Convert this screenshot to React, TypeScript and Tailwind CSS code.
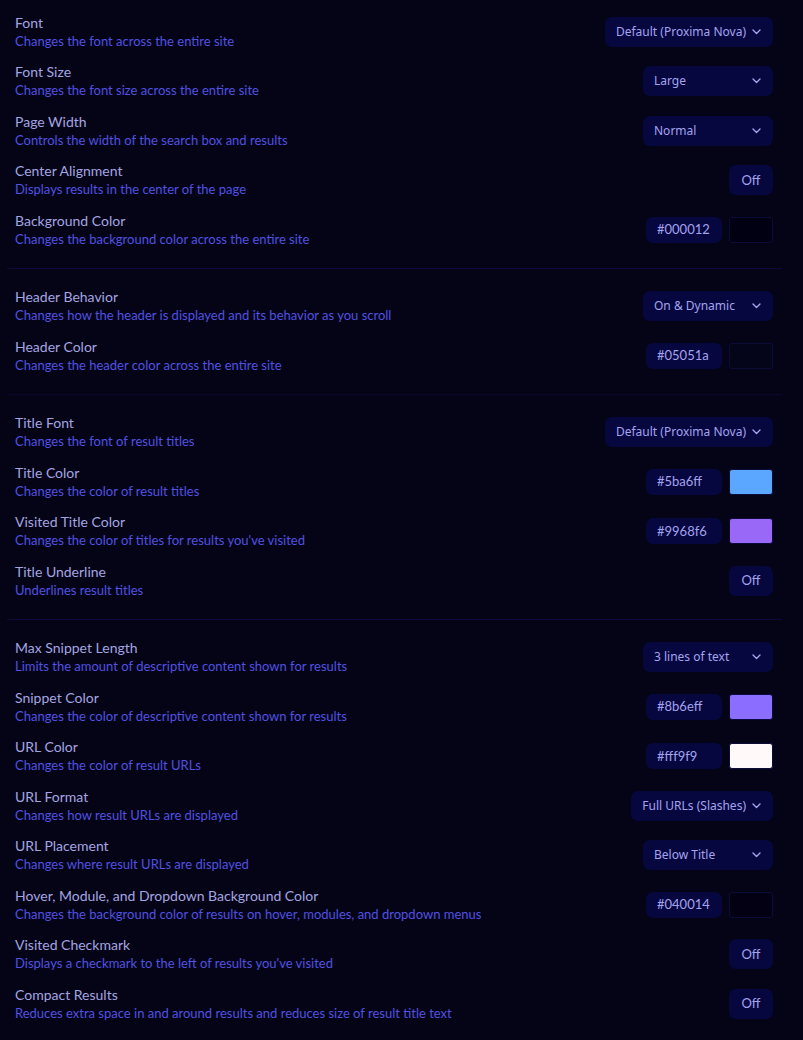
import React from "react";

type Row =
  | { title: string; desc: string; kind: "select"; value: string }
  | { title: string; desc: string; kind: "toggle"; value: string }
  | { title: string; desc: string; kind: "color"; value: string; swatch: string };

const sections: { rows: Row[]; line: string; top: string }[] = [
  {
    top: "pt-[7px]",
    line: "border-[#0a0a3c]",
    rows: [
      { title: "Font", desc: "Changes the font across the entire site", kind: "select", value: "Default (Proxima Nova)" },
      { title: "Font Size", desc: "Changes the font size across the entire site", kind: "select", value: "Large" },
      { title: "Page Width", desc: "Controls the width of the search box and results", kind: "select", value: "Normal" },
      { title: "Center Alignment", desc: "Displays results in the center of the page", kind: "toggle", value: "Off" },
      { title: "Background Color", desc: "Changes the background color across the entire site", kind: "color", value: "#000012", swatch: "#000012" },
    ],
  },
  {
    top: "pt-[13px]",
    line: "border-[#08082e]",
    rows: [
      { title: "Header Behavior", desc: "Changes how the header is displayed and its behavior as you scroll", kind: "select", value: "On & Dynamic" },
      { title: "Header Color", desc: "Changes the header color across the entire site", kind: "color", value: "#05051a", swatch: "#05051a" },
    ],
  },
  {
    top: "pt-[13px]",
    line: "border-[#0a0a3c]",
    rows: [
      { title: "Title Font", desc: "Changes the font of result titles", kind: "select", value: "Default (Proxima Nova)" },
      { title: "Title Color", desc: "Changes the color of result titles", kind: "color", value: "#5ba6ff", swatch: "#5ba6ff" },
      { title: "Visited Title Color", desc: "Changes the color of titles for results you've visited", kind: "color", value: "#9968f6", swatch: "#9968f6" },
      { title: "Title Underline", desc: "Underlines result titles", kind: "toggle", value: "Off" },
    ],
  },
  {
    top: "pt-[13px]",
    line: "border-transparent",
    rows: [
      { title: "Max Snippet Length", desc: "Limits the amount of descriptive content shown for results", kind: "select", value: "3 lines of text" },
      { title: "Snippet Color", desc: "Changes the color of descriptive content shown for results", kind: "color", value: "#8b6eff", swatch: "#8b6eff" },
      { title: "URL Color", desc: "Changes the color of result URLs", kind: "color", value: "#fff9f9", swatch: "#fff9f9" },
      { title: "URL Format", desc: "Changes how result URLs are displayed", kind: "select", value: "Full URLs (Slashes)" },
      { title: "URL Placement", desc: "Changes where result URLs are displayed", kind: "select", value: "Below Title" },
      { title: "Hover, Module, and Dropdown Background Color", desc: "Changes the background color of results on hover, modules, and dropdown menus", kind: "color", value: "#040014", swatch: "#040014" },
      { title: "Visited Checkmark", desc: "Displays a checkmark to the left of results you've visited", kind: "toggle", value: "Off" },
      { title: "Compact Results", desc: "Reduces extra space in and around results and reduces size of result title text", kind: "toggle", value: "Off" },
    ],
  },
];

const ctrlFont = { fontFamily: "'Noto Sans', 'Open Sans', sans-serif" };

function Chevron() {
  return (
    <svg width="9" height="6" viewBox="0 0 9 6" fill="none" className="shrink-0">
      <polyline points="1,1 4.5,4.5 8,1" stroke="#a3a3f0" strokeWidth="1.4" strokeLinecap="round" strokeLinejoin="round" />
    </svg>
  );
}

function Control({ row }: { row: Row }) {
  if (row.kind === "select") {
    return (
      <div
        style={ctrlFont}
        className="flex h-[30px] min-w-[130px] items-center justify-between gap-[6px] rounded-[7px] bg-[#07073f] pl-[11px] pr-[12px] text-[12px] text-[#a3a3f0]"
      >
        <span>{row.value}</span>
        <Chevron />
      </div>
    );
  }
  if (row.kind === "toggle") {
    return (
      <div className="flex h-[30px] w-[44px] items-center justify-center rounded-[7px] bg-[#07073f] text-[13px] text-[#a3a3f0]">
        {row.value}
      </div>
    );
  }
  return (
    <div className="flex items-center gap-[7px]">
      <div className="flex h-[26px] w-[76px] items-center rounded-[7px] bg-[#07073f] pl-[11px] text-[13px] text-[#a3a3f0]">
        {row.value}
      </div>
      <div
        className="h-[26px] w-[44px] rounded-[3px] border border-[#0c0c3c]"
        style={{ backgroundColor: row.swatch }}
      ></div>
    </div>
  );
}

export default function App() {
  return (
    <div
      className="min-h-[1040px] w-full bg-[#040416]"
      style={{ fontFamily: "Lato, 'Liberation Sans', sans-serif" }}
    >
      <div className="ml-[7px] w-[775px]">
        {sections.map((section, i) => (
          <section key={i} className={`${section.top} pb-[13px] border-b ${section.line}`}>
            {section.rows.map((row) => (
              <div key={row.title} className="flex h-[49.5px] items-center justify-between pl-[8px] pr-[9px]">
                <div className="flex flex-col">
                  <p className="text-[14px] leading-[19px] text-[#a4a4e2]">{row.title}</p>
                  <p className="text-[13px] leading-[19px] text-[#5151e2]">{row.desc}</p>
                </div>
                <Control row={row} />
              </div>
            ))}
          </section>
        ))}
      </div>
    </div>
  );
}
